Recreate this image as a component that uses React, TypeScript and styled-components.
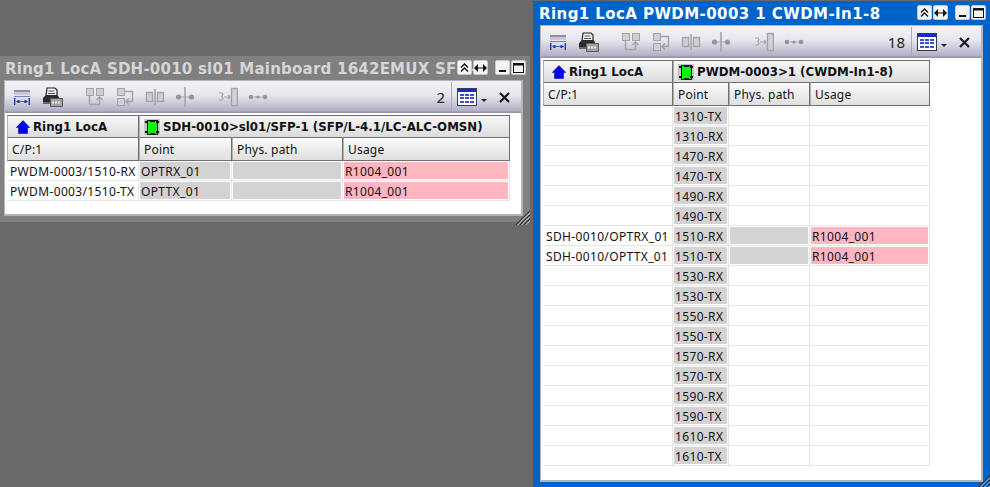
import styled, { createGlobalStyle } from "styled-components";

const GlobalStyle = createGlobalStyle`
  html, body {
    margin: 0;
    padding: 0;
    background: #696969;
    overflow: hidden;
  }
  #root {
    width: 990px;
    height: 487px;
  }
`;

const UI_FONT = `"Noto Sans", "Liberation Sans", sans-serif`;
const BOLD_FONT = `"DejaVu Sans", Verdana, sans-serif`;

function LegendIcon() {
  return (
    <svg width="16" height="15" viewBox="0 0 16 15">
      <rect x="0" y="0" width="16" height="2" fill="#8d8da0" />
      <rect x="0" y="2" width="16" height="3" fill="#c8c8d8" />
      <rect x="0" y="6" width="16" height="1" fill="#6f86c8" />
      <path d="M0.700 8v7M15.300 8v7" stroke="#1f3fa8" strokeWidth="1.400" />
      <path d="M2 11.500h12" stroke="#5a6a9a" strokeWidth="1" />
      <circle cx="4.500" cy="11.500" r="1.500" fill="#1f3fa8" />
      <circle cx="11.500" cy="11.500" r="1.500" fill="#1f3fa8" />
    </svg>
  );
}

function PrinterIcon() {
  return (
    <svg width="21" height="20" viewBox="0 0 21 20">
      <path d="M5 1h8l2 2v6H4z" fill="#f4f4f4" stroke="#222" strokeWidth="1.200" />
      <path d="M6.500 4h6M6 6.500h7" stroke="#555" strokeWidth="1" />
      <path d="M2 10l2-2h11l2 2v1H8v5H1v-5z" fill="#2b2b2b" />
      <rect x="1" y="15" width="8" height="2" fill="#666" />
      <rect x="8.500" y="11.500" width="12" height="8" fill="#a2a2a2" stroke="#5c5c5c" />
      <path d="M10 15.500h9" stroke="#ececec" strokeWidth="2" strokeDasharray="2 1" />
    </svg>
  );
}

function SwapUpIcon() {
  return (
    <svg width="20" height="20" viewBox="0 0 20 20" fill="none" stroke="#a4a4a8">
      <rect x="1.500" y="1.500" width="7" height="7" fill="#d0d0d4" />
      <rect x="11.500" y="1.500" width="7" height="7" fill="#d0d0d4" />
      <path d="M4.500 9v8.500h10v-7" strokeWidth="1.500" />
      <path d="M11.500 13l3-3 3 3" strokeWidth="1.500" />
    </svg>
  );
}

function SwapLeftIcon() {
  return (
    <svg width="18" height="20" viewBox="0 0 18 20" fill="none" stroke="#a4a4a8">
      <rect x="1.500" y="1.500" width="7" height="7" fill="#d0d0d4" />
      <rect x="1.500" y="11.500" width="7" height="7" fill="#d0d0d4" />
      <path d="M9 4.500h7.500v10H11" strokeWidth="1.500" />
      <path d="M13 11.500l-3 3 3 3" strokeWidth="1.500" />
    </svg>
  );
}

function SplitIcon() {
  return (
    <svg width="20" height="18" viewBox="0 0 20 18" fill="none" stroke="#a4a4a8">
      <rect x="1.500" y="4.500" width="6" height="9" fill="#d0d0d4" strokeWidth="1.400" />
      <rect x="12.500" y="4.500" width="6" height="9" fill="#d0d0d4" strokeWidth="1.400" />
      <path d="M10 1v16" strokeWidth="1.600" />
    </svg>
  );
}

function NodeCrossIcon() {
  return (
    <svg width="20" height="20" viewBox="0 0 20 20">
      <path d="M10 0v20" stroke="#a4a4a8" strokeWidth="1.600" />
      <path d="M3 10h14" stroke="#a4a4a8" strokeWidth="1" />
      <circle cx="3.500" cy="10" r="2.600" fill="#96969a" />
      <circle cx="16.500" cy="10" r="2.600" fill="#96969a" />
    </svg>
  );
}

function InsertIcon() {
  return (
    <svg width="20" height="20" viewBox="0 0 20 20" fill="none" stroke="#a4a4a8">
      <rect x="13.500" y="1.500" width="6" height="17" fill="#d0d0d4" strokeWidth="1.400" />
      <path d="M1 6h3l1 1.500-1.500 2 1.500 2L4 13H1" strokeWidth="1.200" />
      <path d="M6 10h6M10 8l2 2-2 2" strokeWidth="1.200" />
    </svg>
  );
}

function NodeLineIcon() {
  return (
    <svg width="20" height="10" viewBox="0 0 20 10">
      <path d="M2 5h16" stroke="#a4a4a8" strokeWidth="1" strokeDasharray="3 1" />
      <circle cx="3" cy="5" r="2.300" fill="#96969a" />
      <circle cx="10" cy="5" r="1.600" fill="#96969a" />
      <circle cx="17" cy="5" r="2.300" fill="#96969a" />
    </svg>
  );
}

function TableIcon() {
  return (
    <svg width="20" height="18" viewBox="0 0 20 18" shapeRendering="crispEdges">
      <rect x="0.500" y="0.500" width="19" height="17" fill="#fff" stroke="#333a5c" />
      <rect x="1" y="1" width="18" height="3" fill="#1a28c8" />
      {[6, 9, 13].map((y) =>
        [3, 8, 13].map((x) => (
          <rect key={`${x}-${y}`} x={x} y={y} width="4" height="2" fill="#3c50c8" />
        )),
      )}
    </svg>
  );
}

function CloseIcon() {
  return (
    <svg width="11" height="11" viewBox="0 0 11 11">
      <path d="M1 1l9 9M10 1l-9 9" stroke="#1a1a22" strokeWidth="2.200" />
    </svg>
  );
}

function HomeIcon() {
  return (
    <svg width="14" height="14" viewBox="0 0 14 14">
      <path d="M7 0.500L13.800 7.500H11.500V13.500H2.500V7.500H0.200z" fill="#0000f0" stroke="#00008a" strokeWidth="0.500" />
    </svg>
  );
}

function ModuleIcon() {
  return (
    <svg width="16" height="16" viewBox="0 0 16 16" shapeRendering="crispEdges">
      <rect width="16" height="16" fill="#c4c4c4" />
      <rect x="3" y="1" width="10" height="14" fill="#00ff00" stroke="#111" />
      <path d="M1 3h3M12 3h3M1 13h3M12 13h3" stroke="#111" strokeWidth="2" />
      <path d="M6 1v1h4V1M6 15v-1h4v1" fill="none" stroke="#111" />
    </svg>
  );
}

function Grip() {
  return (
    <svg width="14" height="14" viewBox="0 0 14 14">
      <path d="M0 14L14 0M4 14L14 4M8 14l6-6" stroke="#2a2a2a" strokeWidth="1.200" />
      <path d="M1.500 14L14 1.500M5.500 14L14 5.500M9.500 14l4.500-4.500" stroke="#d8d8d8" strokeWidth="1" />
    </svg>
  );
}

const Desktop = styled.div`
  position: relative;
  width: 990px;
  height: 487px;
  background: #696969;
  overflow: hidden;
  font-family: ${UI_FONT};
  color: #111;
`;

const Window = styled.section<{ $active?: boolean; $x: number; $y: number; $w: number; $h: number }>`
  position: absolute;
  left: ${(p) => p.$x}px;
  top: ${(p) => p.$y}px;
  width: ${(p) => p.$w}px;
  height: ${(p) => p.$h}px;
  box-sizing: border-box;
  display: flex;
  flex-direction: column;
  padding: 0 7px ${(p) => (p.$active ? 5 : 6)}px ${(p) => (p.$active ? 7 : 4)}px;
  background: ${(p) => (p.$active ? "#0063c8" : "#808080")};
  color: ${(p) => (p.$active ? "#ffffff" : "#d6d6d6")};
`;

const TitleBar = styled.header<{ $active?: boolean }>`
  height: 24px;
  flex: none;
  box-sizing: border-box;
  padding-top: 2px;
  margin-left: ${(p) => (p.$active ? -1 : 1)}px;
  font: bold 15px/22px ${BOLD_FONT};
  letter-spacing: ${(p) => (p.$active ? 0.42 : 0.23)}px;
  white-space: nowrap;
  overflow: hidden;
`;

const WindowButtons = styled.div`
  position: absolute;
  top: 4px;
  right: 4px;
  display: flex;
  gap: 1px;
`;

const WindowButton = styled.button<{ $gap?: boolean }>`
  width: 15px;
  height: 15px;
  padding: 0;
  margin-left: ${(p) => (p.$gap ? 6 : 0)}px;
  display: flex;
  align-items: center;
  justify-content: center;
  background: #f4f4f4;
  border: 1px solid #c8c8c8;
  border-radius: 2px;
`;

const Body = styled.div`
  flex: 1;
  display: flex;
  flex-direction: column;
  background: #fff;
  border: 1px solid #b4b4b8;
  border-bottom-width: 2px;
  border-right-width: 2px;
  min-height: 0;
`;

const Toolbar = styled.div`
  height: 32px;
  flex: none;
  display: flex;
  align-items: center;
  padding-left: 2px;
  background: linear-gradient(#f3f3f6 0%, #e6e6ee 45%, #b2b1c6 92%, #8f8ea6 100%);
`;

const ToolSlot = styled.span<{ $group?: boolean }>`
  width: 30px;
  height: 30px;
  margin-left: ${(p) => (p.$group ? 13 : 0)}px;
  display: flex;
  align-items: center;
  justify-content: center;
`;

const Count = styled.span`
  margin-left: auto;
  padding-right: 6px;
  font-size: 15px;
  color: #222;
`;

const ToolDivider = styled.span`
  width: 1px;
  height: 30px;
  background: #a9a8ba;
`;

const ViewButton = styled.span`
  width: 40px;
  margin-left: 5px;
  display: flex;
  align-items: center;
  gap: 4px;
`;

const Caret = styled.span`
  width: 0;
  height: 0;
  margin-top: 6px;
  border-left: 3px solid transparent;
  border-right: 3px solid transparent;
  border-top: 3px solid #222;
`;

const CloseSlot = styled.span`
  width: 22px;
  margin-left: 2px;
  display: flex;
  align-items: center;
`;

const TableWrap = styled.div`
  padding: 2px 0 0 2px;
`;

const Table = styled.div<{ $cols: string }>`
  display: grid;
  grid-template-columns: ${(p) => p.$cols};
  width: max-content;
  color: #111;
`;

const HeadCell = styled.div<{ $span?: number; $pad: number }>`
  grid-column: span ${(p) => p.$span ?? 1};
  box-sizing: border-box;
  height: 22px;
  display: flex;
  align-items: center;
  gap: 3px;
  padding-left: ${(p) => p.$pad}px;
  background: linear-gradient(#f7f7f7, #dcdcdc);
  border: 1px solid #6f6f6f;
  border-left-color: #b0b0b0;
  border-width: 1px 1px 0 1px;
  font: bold 11.8px ${BOLD_FONT};
  white-space: nowrap;
`;

const ColCell = styled.div`
  box-sizing: border-box;
  height: 24px;
  display: flex;
  align-items: center;
  padding-left: 4px;
  background: linear-gradient(#fbfbfb, #dfdfdf);
  border: 1px solid #6f6f6f;
  border-left-color: #b0b0b0;
  font-size: 12px;
  letter-spacing: 0.2px;
  white-space: nowrap;
`;

const Cell = styled.div<{ $fill?: string; $first?: boolean }>`
  box-sizing: border-box;
  height: 20px;
  display: flex;
  align-items: center;
  padding: 1px 0 0 ${(p) => (p.$first ? 3 : 2)}px;
  background: ${(p) => p.$fill ?? "#fff"};
  border-right: 1px solid #e6e6e6;
  border-bottom: 1px solid #e6e6e6;
  box-shadow: inset 0 0 0 1px #fff;
  font-size: 12px;
  letter-spacing: 0.35px;
  white-space: nowrap;
`;

const GripSlot = styled.div`
  position: absolute;
  right: 0;
  bottom: 0;
  width: 14px;
  height: 14px;
`;

const GREY = "#d3d3d3";
const PINK = "#ffb6c1";

type RowData = { cp: string; point: string; used?: boolean };

function Row({ row }: { row: RowData }) {
  return (
    <>
      <Cell $first>{row.cp}</Cell>
      <Cell $fill={GREY}>{row.point}</Cell>
      <Cell $fill={row.used ? GREY : undefined} />
      <Cell $fill={row.used ? PINK : undefined}>{row.used ? "R1004_001" : ""}</Cell>
    </>
  );
}

function ConnectorWindow(props: {
  active?: boolean;
  x: number;
  y: number;
  w: number;
  h: number;
  title: string;
  module: string;
  count: string;
  cols: string;
  rows: RowData[];
}) {
  const { active, x, y, w, h, title, module, count, cols, rows } = props;
  return (
    <Window $active={active} $x={x} $y={y} $w={w} $h={h}>
      <TitleBar $active={active}>{title}</TitleBar>
      <WindowButtons>
        <WindowButton>
          <svg width="9" height="10" viewBox="0 0 9 10" fill="none" stroke="#111" strokeWidth="1.300">
            <path d="M1 4.500l3.500-3.500L8 4.500M1 8.500L4.500 5 8 8.500" />
          </svg>
        </WindowButton>
        <WindowButton>
          <svg width="13" height="8" viewBox="0 0 13 8" fill="#111">
            <path d="M0 4l4-4v8zM13 4l-4-4v8z" />
            <path d="M3 3.500h7v1H3z" />
          </svg>
        </WindowButton>
        <WindowButton $gap>
          <svg width="9" height="10" viewBox="0 0 9 10" fill="#111">
            <rect x="1" y="7" width="7" height="2" />
          </svg>
        </WindowButton>
        <WindowButton>
          <svg width="11" height="10" viewBox="0 0 11 10" fill="none" stroke="#111">
            <rect x="0.500" y="0.500" width="10" height="9" />
            <path d="M0 1.500h11" strokeWidth="2" />
          </svg>
        </WindowButton>
      </WindowButtons>
      <Body>
        <Toolbar>
          <ToolSlot><LegendIcon /></ToolSlot>
          <ToolSlot><PrinterIcon /></ToolSlot>
          <ToolSlot $group><SwapUpIcon /></ToolSlot>
          <ToolSlot><SwapLeftIcon /></ToolSlot>
          <ToolSlot><SplitIcon /></ToolSlot>
          <ToolSlot><NodeCrossIcon /></ToolSlot>
          <ToolSlot $group><InsertIcon /></ToolSlot>
          <ToolSlot><NodeLineIcon /></ToolSlot>
          <Count>{count}</Count>
          <ToolDivider />
          <ViewButton><TableIcon /><Caret /></ViewButton>
          <CloseSlot><CloseIcon /></CloseSlot>
        </Toolbar>
        <TableWrap>
          <Table $cols={cols}>
            <HeadCell $pad={8}><HomeIcon />Ring1 LocA</HeadCell>
            <HeadCell $span={3} $pad={4}><ModuleIcon />{module}</HeadCell>
            <ColCell>C/P:1</ColCell>
            <ColCell>Point</ColCell>
            <ColCell>Phys. path</ColCell>
            <ColCell>Usage</ColCell>
            {rows.map((r) => (
              <Row key={r.point} row={r} />
            ))}
          </Table>
        </TableWrap>
      </Body>
      <GripSlot><Grip /></GripSlot>
    </Window>
  );
}

const CWDM_POINTS = [
  "1310-TX", "1310-RX", "1470-RX", "1470-TX", "1490-RX", "1490-TX",
  "1510-RX", "1510-TX", "1530-RX", "1530-TX", "1550-RX", "1550-TX",
  "1570-RX", "1570-TX", "1590-RX", "1590-TX", "1610-RX", "1610-TX",
];

const cwdmRows: RowData[] = CWDM_POINTS.map((point) => {
  if (point === "1510-RX") return { cp: "SDH-0010/OPTRX_01", point, used: true };
  if (point === "1510-TX") return { cp: "SDH-0010/OPTTX_01", point, used: true };
  return { cp: "", point };
});

const sdhRows: RowData[] = [
  { cp: "PWDM-0003/1510-RX", point: "OPTRX_01", used: true },
  { cp: "PWDM-0003/1510-TX", point: "OPTTX_01", used: true },
];

export default function App() {
  return (
    <>
      <GlobalStyle />
      <Desktop>
        <ConnectorWindow
          x={0}
          y={56}
          w={530}
          h={166}
          title="Ring1 LocA SDH-0010 sl01 Mainboard 1642EMUX SFP-1"
          module="SDH-0010>sl01/SFP-1 (SFP/L-4.1/LC-ALC-OMSN)"
          count="2"
          cols="132px 93px 111px 167px"
          rows={sdhRows}
        />
        <ConnectorWindow
          active
          x={533}
          y={1}
          w={457}
          h={486}
          title="Ring1 LocA PWDM-0003 1 CWDM-In1-8"
          module="PWDM-0003>1 (CWDM-In1-8)"
          count="18"
          cols="130px 56px 81px 120px"
          rows={cwdmRows}
        />
      </Desktop>
    </>
  );
}
